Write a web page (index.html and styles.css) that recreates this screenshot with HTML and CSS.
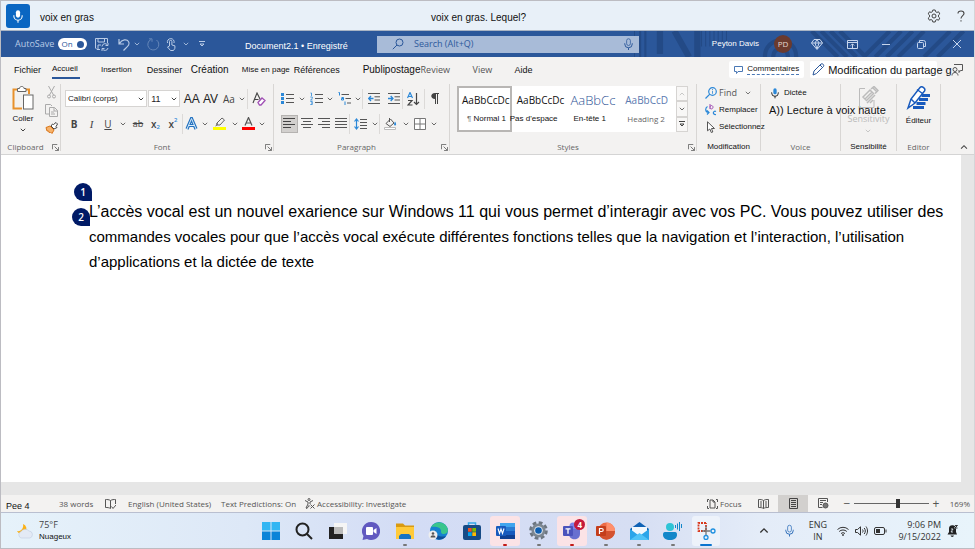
FILE: index.html
```
<!DOCTYPE html>
<html lang="fr">
<head>
<meta charset="utf-8">
<meta name="viewport" content="width=device-width, initial-scale=1">
<title>Document2.1</title>
<link rel="stylesheet" href="styles.css">
</head>
<body>
<svg class="sprite" aria-hidden="true">
  <symbol id="chev" viewBox="0 0 6 4"><path d="M.8.8 3 3l2.200-2.200" fill="none" stroke="currentColor" stroke-width=".8"/></symbol>
  <symbol id="launch" viewBox="0 0 8 8"><path d="M.5 6V.5H6M3 3l4 4M7.500 3.500v4h-4" fill="none" stroke="currentColor"/></symbol>
  <symbol id="mic" viewBox="0 0 12 16"><rect x="3.500" y="1" width="5" height="9" rx="2.500"/><path d="M1 7v1a5 5 0 0 0 10 0V7M6 13v3" fill="none" stroke="currentColor" stroke-width="1.300"/></symbol>
</svg>

<header class="voice">
  <button class="voice-mic" aria-label="Microphone"><svg width="10" height="14" fill="currentColor"><use href="#mic"/></svg></button>
  <span class="said">voix en gras</span>
  <span class="prompt">voix en gras. Lequel?</span>
  <button class="gear" aria-label="Paramètres"><svg width="14" height="14" viewBox="0 0 14 14" fill="none" stroke="#444" stroke-width="1"><path d="M5.800 1h2.400l.4 1.700 1.300.7 1.700-.6 1.200 2.100-1.300 1.200v1.800l1.300 1.200-1.200 2.100-1.700-.6-1.300.7L8.200 13H5.800l-.4-1.700-1.300-.7-1.700.6L1.200 9.100l1.300-1.200V6.100L1.200 4.900l1.200-2.100 1.700.6 1.300-.7z"/><circle cx="7" cy="7" r="2"/></svg></button>
  <button class="help" aria-label="Aide"><svg width="8" height="12" viewBox="0 0 8 12" fill="none" stroke="#444" stroke-width="1.100"><path d="M1 3.500C1 .2 7 .2 7 3.500 7 5.500 4 5.800 4 8.500M4 10.200v1.300"/></svg></button>
</header>

<div class="title">
  <svg class="pattern" viewBox="0 0 340 25" preserveAspectRatio="xMaxYMid slice" aria-hidden="true" fill="none" stroke="#234a86">
    <path d="M5 0v25M9 0v25M13 0v25M19 0v25M24 0v25" stroke-width="2"/>
    <path d="M38 0v22M52 0l14 25M74 0v25" stroke-width="6"/>
    <path d="M78 0v15M82 0v15M86 0v15M90 0v15M94 0v15M98 0v15M102 0v15" stroke-width="1"/>
    <circle cx="154" cy="24" r="7" stroke-width="4"/><circle cx="154" cy="24" r="15" stroke-width="4"/>
    <path d="M184 0l25 25M193 0l25 25M202 0l25 25M211 0l25 25M234 25l25-25M245 25l25-25M256 25l25-25M267 25l25-25M292 25l25-25M305 25l25-25" stroke-width="4"/>
  </svg>
  <span class="autosave">AutoSave</span>
  <button class="toggle" role="switch" aria-checked="true">On<i></i></button>
  <div class="quick">
    <button aria-label="Enregistrer"><svg width="14" height="13" viewBox="0 0 14 13" fill="none" stroke="currentColor"><path d="M5 11.500H2L.5 10V.5h12V5M3 .5V4h6.500V.5M3 11V7h3M7 8.500A3 3 0 0 1 12.500 7M13 5v2.500h-2.500M13 10a3 3 0 0 1-5.500 1M7 13v-2.500h2.500"/></svg></button>
    <button aria-label="Annuler"><svg width="13" height="13" viewBox="0 0 13 13" fill="none" stroke="currentColor" stroke-width="1.200"><path d="M1 1v5h5M1.500 5.500C4 1 9 1 10.500 3.500c2 3-1 5-5 9"/></svg></button>
    <button aria-label="Options"><svg width="6" height="4"><use href="#chev"/></svg></button>
    <button class="dim" aria-label="Rétablir"><svg width="13" height="13" viewBox="0 0 13 13" fill="none" stroke="currentColor"><path d="M4 1.500A5.500 5.500 0 1 0 9.500 2M2 .8h3v3"/></svg></button>
    <button aria-label="Tactile"><svg width="11" height="13" viewBox="0 0 11 13" fill="none" stroke="currentColor"><path d="M3.500 7V3.500a1.200 1.200 0 0 1 2.400 0V7l3 .8v2.500L7.500 12.500h-3L1.500 9 3.500 8zM1.500 5a3.400 3.400 0 1 1 6.500 0"/></svg></button>
    <button aria-label="Options"><svg width="6" height="4"><use href="#chev"/></svg></button>
    <button aria-label="Personnaliser"><svg width="6" height="6" viewBox="0 0 6 6" fill="none" stroke="currentColor"><path d="M0 .5h6M1 3l2 2 2-2z"/></svg></button>
  </div>
  <span class="docname">Document2.1 • Enregistré</span>
  <label class="search"><svg width="12" height="12" viewBox="0 0 12 12" fill="none" stroke="#2b579a"><circle cx="7.500" cy="4.500" r="3.500"/><path d="M5 7 .8 11.200"/></svg><input type="text" placeholder="Search (Alt+Q)" aria-label="Search"><svg width="9" height="12" class="outline"><use href="#mic"/></svg></label>
  <span class="user">Peyton Davis</span>
  <span class="avatar">PD</span>
  <div class="wins">
    <button aria-label="Premium"><svg width="12" height="11" viewBox="0 0 12 11" fill="none" stroke="currentColor"><path d="M3 .5h6L11.500 4 6 10.500.5 4zM.5 4h11M4 4l2 6 2-6-2-3.500z"/></svg></button>
    <button aria-label="Ruban"><svg width="11" height="9" viewBox="0 0 11 9" fill="none" stroke="currentColor"><path d="M.5.5h10v8H.5zM.5 2.500h10M5.500 8V4M3.800 5.500l1.700-1.700 1.700 1.700"/></svg></button>
    <button aria-label="Réduire"><svg width="9" height="9" viewBox="0 0 9 9" stroke="currentColor"><path d="M0 4.500h8"/></svg></button>
    <button aria-label="Agrandir"><svg width="9" height="9" viewBox="0 0 9 9" fill="none" stroke="currentColor"><rect x=".5" y="2.500" width="6" height="6" rx="1"/><path d="M2.500 2V.5h4A2 2 0 0 1 8.500 2.500v4H7"/></svg></button>
    <button aria-label="Fermer"><svg width="8" height="8" viewBox="0 0 8 8" stroke="currentColor"><path d="M0 0l8 8M8 0L0 8"/></svg></button>
  </div>
</div>

<nav class="tabs">
  <a href="#" class="m">Fichier</a>
  <a href="#" class="s active">Accueil</a>
  <a href="#" class="s">Insertion</a>
  <a href="#" class="m">Dessiner</a>
  <a href="#">Création</a>
  <a href="#" class="s">Mise en page</a>
  <a href="#" class="m">Références</a>
  <a href="#">Publipostage</a>
  <a href="#" class="seg">Review</a>
  <a href="#" class="seg">View</a>
  <a href="#" class="m">Aide</a>
  <button class="comments"><svg width="9" height="8" viewBox="0 0 9 8" fill="none" stroke="#4a78b5"><path d="M.5.5h8v5H4L2.500 7.500v-2h-2z"/></svg><span>Commentaires</span></button>
  <button class="editing"><svg width="13" height="13" viewBox="0 0 13 13" fill="none" stroke="#2b579a"><path d="M1 12l1-4 7-7c1.500-1 3.500 1 2.500 2.500l-7 7zM8 2l3 3"/></svg>Modification du partage g<svg class="person" width="12" height="12" viewBox="0 0 12 12" fill="none" stroke="#555"><path d="M3 .5h8.500v6H9.500L8 8.500V6M1 11.500c0-4 6-4 6 0"/><circle cx="4" cy="5.500" r="2"/></svg></button>
</nav>

<main class="ribbon">
  <section class="g clip">
    <div class="body">
      <button class="paste"><svg width="22" height="24" viewBox="0 0 22 24" fill="none"><path d="M5 3.500H1.500v19H10M14 3.500h3V8" stroke="#e8912d" stroke-width="2"/><path d="M5.500 5.500v-3h2C7.500-.2 12-.2 12 2.500h2v3z" fill="#fff" stroke="#666"/><rect x="11.500" y="9" width="9.500" height="14" fill="#fff" stroke="#666"/></svg><span>Coller</span><svg width="6" height="4"><use href="#chev"/></svg></button>
      <div class="stack">
        <button aria-label="Couper"><svg width="9" height="13" viewBox="0 0 9 13" fill="none" stroke="#aaa"><path d="M1.500 0l5 9M7.500 0l-5 9"/><circle cx="2" cy="10.500" r="1.500"/><circle cx="7" cy="10.500" r="1.500"/></svg></button>
        <button aria-label="Copier"><svg width="13" height="13" viewBox="0 0 13 13" fill="none" stroke="#aaa"><path d="M4.500 10H.5V.5h5L7 2M4.500 3.500h5l3 3v6h-8zM9 3.500V7h3.500M6 8h3M6 10h4"/></svg></button>
        <button aria-label="Reproduire"><svg width="13" height="12" viewBox="0 0 13 12" fill="none"><path d="M1 5.500 5 4l4 4-2 3.500L5.500 10l-1 1-1-2L2 9z" fill="#f6b26b" stroke="#d9761a"/><path d="M6 4l3 3 3-1.500-1-1L12.500 2 11 .5 8.500 2.500l-1-.5z" fill="#fff" stroke="#444"/></svg></button>
      </div>
    </div>
    <footer><span>Clipboard</span><button aria-label="Presse-papiers"><svg width="7" height="7"><use href="#launch"/></svg></button></footer>
  </section>

  <section class="g font">
    <div class="body rows">
      <div class="r1">
        <select class="family" aria-label="Police"><option>Calibri (corps)</option></select>
        <select class="size" aria-label="Taille"><option>11</option></select>
        <button class="big">AA</button><button class="big">AV</button>
        <button class="aa">Aa</button><button aria-label="Casse"><svg width="6" height="4"><use href="#chev"/></svg></button>
        <button class="bl" aria-label="Effacer"><svg width="14" height="14" viewBox="0 0 14 14" fill="none"><path d="M1 11 5 1l4 8M2.500 7.500h4" stroke="#444" stroke-width="1.100"/><path d="M6 10.500 10 6l3 2.500-4 4.500H7.500z" fill="#fff" stroke="#a04fb5" stroke-width="1.300"/></svg></button>
      </div>
      <div class="r2">
        <button class="b">B</button><button class="i">I</button><button class="u">U</button><button aria-label="Soulignement"><svg width="6" height="4"><use href="#chev"/></svg></button>
        <button class="st">ab</button><button class="x">x<sub>2</sub></button><button class="x">x<sup>2</sup></button>
        <button class="bl" aria-label="Effets"><svg width="13" height="13" viewBox="0 0 13 13" fill="none"><path d="M2 12 6.500 1.500 11 12M3.500 8.500h6" stroke="#2372c0" stroke-width="3.200"/><path d="M2 12 6.500 1.500 11 12M3.500 8.500h6" stroke="#d9ecfa" stroke-width="1"/></svg></button><button aria-label="Effets"><svg width="6" height="4"><use href="#chev"/></svg></button>
        <button aria-label="Surlignage"><svg width="13" height="13" viewBox="0 0 13 13" fill="none"><path d="M4 6 9 1l2.500 2-4.500 5H4zM4 6v2L2.500 9" stroke="#666"/><path d="M0 10h13v3H0z" fill="#ff0"/></svg></button><button aria-label="Surlignage"><svg width="6" height="4"><use href="#chev"/></svg></button>
        <button aria-label="Couleur"><svg width="13" height="13" viewBox="0 0 13 13" fill="none"><path d="M3 8.500 6.500.5 10 8.500M4 6h5" stroke="#555" stroke-width="1.200"/><path d="M0 10h13v3H0z" fill="#f00"/></svg></button><button aria-label="Couleur"><svg width="6" height="4"><use href="#chev"/></svg></button>
      </div>
    </div>
    <footer><span>Font</span><button aria-label="Police"><svg width="7" height="7"><use href="#launch"/></svg></button></footer>
  </section>

  <section class="g para">
    <div class="body rows">
      <div class="r1">
        <button aria-label="Puces"><svg width="13" height="13" viewBox="0 0 13 13"><path d="M0 1h3v3H0zM0 5h3v3H0zM0 9h3v3H0z" fill="#2b88d8"/><path d="M5 2.500h8M5 6.500h8M5 10.500h8" stroke="#555"/></svg></button><button aria-label="Puces"><svg width="6" height="4"><use href="#chev"/></svg></button>
        <button aria-label="Numérotation"><svg width="13" height="13" viewBox="0 0 13 13" fill="none"><path d="M.5 1h1v3M.3 5h2v1.500L.5 8h2M.3 9.500h2v3h-2M1 11h1" stroke="#2b88d8" stroke-width=".8"/><path d="M5 2.500h8M5 6.500h8M5 10.500h8" stroke="#555"/></svg></button><button aria-label="Numérotation"><svg width="6" height="4"><use href="#chev"/></svg></button>
        <button aria-label="Niveaux"><svg width="13" height="13" viewBox="0 0 13 13" fill="none"><path d="M.5.5h1v3M3.500 5.500h2v2.500h-2V6.500h2M7 9.500V13" stroke="#2b88d8"/><path d="M3.500 2.500H11M7.500 6.500H13M9 11h4" stroke="#555"/></svg></button><button aria-label="Niveaux"><svg width="6" height="4"><use href="#chev"/></svg></button>
        <button class="bl" aria-label="Diminuer le retrait"><svg width="12" height="11" viewBox="0 0 12 11" fill="none"><path d="M0 .5h12M6.500 3.800H12M6.500 7H12M0 10.500h12" stroke="#555"/><path d="M5.500 5.500H.8M3 3 .7 5.500 3 8" stroke="#2b88d8" stroke-width="1.300"/></svg></button>
        <button aria-label="Augmenter le retrait"><svg width="12" height="11" viewBox="0 0 12 11" fill="none"><path d="M0 .5h12M6.500 3.800H12M6.500 7H12M0 10.500h12" stroke="#555"/><path d="M0 5.500h4.700M2.700 3 5 5.500 2.700 8" stroke="#2b88d8" stroke-width="1.300"/></svg></button>
        <button class="bl" aria-label="Trier"><svg width="13" height="14" viewBox="0 0 13 14" fill="none"><path d="M.5 6 3 .5 5.500 6M1.500 4.500h3" stroke="#2b88d8" stroke-width="1.200"/><path d="M1 8.500h4L1 13h4.500M9.500 1v11.500M7 10l2.500 2.500L12 10" stroke="#444" stroke-width="1.200"/></svg></button>
        <button class="bl" aria-label="Marques"><svg width="8" height="11" viewBox="0 0 8 11"><path d="M4 0h4v1H7v10H6V1H5v10H4V6C-1 6-1 0 4 0z" fill="#444"/></svg></button>
      </div>
      <div class="r2">
        <button class="on" aria-label="Gauche"><svg width="12" height="11" viewBox="0 0 12 11" stroke="#444"><path d="M0 .5h12M0 3.500h8M0 6.500h12M0 9.500h8"/></svg></button>
        <button aria-label="Centre"><svg width="12" height="11" viewBox="0 0 12 11" stroke="#555"><path d="M0 .5h12M2 3.500h8M0 6.500h12M2 9.500h8"/></svg></button>
        <button aria-label="Droite"><svg width="12" height="11" viewBox="0 0 12 11" stroke="#555"><path d="M0 .5h12M4 3.500h8M0 6.500h12M4 9.500h8"/></svg></button>
        <button aria-label="Justifier"><svg width="12" height="11" viewBox="0 0 12 11" stroke="#555"><path d="M0 .5h12M0 3.500h12M0 6.500h12M0 9.500h12"/></svg></button>
        <button class="bl" aria-label="Interligne"><svg width="13" height="12" viewBox="0 0 13 12" fill="none"><path d="M2.500 1v10M.5 3.500l2-2.500 2 2.500M.5 8.500l2 2.500 2-2.500" stroke="#2b88d8" stroke-width="1.200"/><path d="M6 1.500h7M6 4.500h7M6 7.500h7M6 10.500h7" stroke="#555"/></svg></button><button aria-label="Interligne"><svg width="6" height="4"><use href="#chev"/></svg></button>
        <button class="bl" aria-label="Trame"><svg width="13" height="12" viewBox="0 0 13 12" fill="none"><path d="M2 5.500 6.500 1l3.500 4-4 3.500zM5.500 0v4" stroke="#555"/><path d="M11 3.500c1.500 2 1.500 4 0 4s-1-2 0-4z" fill="#2b88d8"/><path d="M.5 9.500h11v2H.5z" fill="#fff" stroke="#bbb"/></svg></button><button aria-label="Trame"><svg width="6" height="4"><use href="#chev"/></svg></button>
        <button aria-label="Bordures"><svg width="12" height="12" viewBox="0 0 12 12" fill="#fff" stroke="#777"><path d="M.5.5h11v11H.5zM6 .5v11M.5 6h11"/></svg></button><button aria-label="Bordures"><svg width="6" height="4"><use href="#chev"/></svg></button>
      </div>
    </div>
    <footer><span>Paragraph</span><button aria-label="Paragraphe"><svg width="7" height="7"><use href="#launch"/></svg></button></footer>
  </section>

  <section class="g styles">
    <div class="body gallery">
      <button class="card sel"><b>AaBbCcDc</b><span><em>¶</em> Normal 1</span></button>
      <button class="card"><b>AaBbCcDc</b><span class="pull">Pas d'espace</span></button>
      <button class="card h1"><b>AaBbCc</b><span>En-tête 1</span></button>
      <button class="card h2"><b>AaBbCcD</b><span>Heading 2</span></button>
      <div class="scroll">
        <button aria-label="Haut"><svg class="up" width="6" height="4"><use href="#chev"/></svg></button>
        <button aria-label="Bas"><svg width="6" height="4"><use href="#chev"/></svg></button>
        <button aria-label="Plus"><svg width="6" height="6" viewBox="0 0 6 6" fill="none" stroke="currentColor"><path d="M0 .5h6M1 3l2 2 2-2z"/></svg></button>
      </div>
    </div>
    <footer><span>Styles</span><button aria-label="Styles"><svg width="7" height="7"><use href="#launch"/></svg></button></footer>
  </section>

  <section class="g edit">
    <div class="body list">
      <button class="find"><svg width="12" height="12" viewBox="0 0 12 12" fill="none" stroke="#2b88d8" stroke-width="1.200"><circle cx="7.500" cy="4.500" r="3.800"/><path d="M4.800 7.200.5 11.500"/><path d="M7.500 3.800v3M7.500 2v1" stroke-width=".8"/></svg><span>Find</span><svg width="6" height="4"><use href="#chev"/></svg></button>
      <button><svg width="12" height="12" viewBox="0 0 12 12" fill="none"><path d="M5 0v5M5 3c0-2 3-2 3 .200S5 5.500 5 3.500" stroke="#a04fb5"/><path d="M2.500 2.500C0 4 0 8 3.500 8.500M2 6.500l2 2-2 2M11 7.500c-3-1.500-4 3.500 0 3" stroke="#2b88d8" stroke-width="1.200"/></svg><span>Remplacer</span></button>
      <button><svg width="12" height="12" viewBox="0 0 12 12" fill="#fff" stroke="#555"><path d="M2.500.8v9L4.800 8l1.500 3.500L7.800 11 6.500 7.500h3z"/></svg><span>Sélectionnez</span></button>
    </div>
    <footer class="fr"><span>Modification</span></footer>
  </section>

  <section class="g say">
    <div class="body list">
      <button class="dictate"><svg width="8" height="12" fill="#2b88d8"><use href="#mic"/></svg><span>Dictée</span></button>
      <button class="read">A)) Lecture à voix haute</button>
    </div>
    <footer><span>Voice</span></footer>
  </section>

  <section class="g sens">
    <div class="body col">
      <button><svg width="22" height="22" viewBox="0 0 22 22" fill="none" stroke="#bbb"><path d="M8 2.500H2.500v19H17V14"/><path d="M6 11l7-7 3.500 3.500-7 7zM8 13l7-7M14 3l3-2.500 4 4L18 7.500M10 17l8-8M16 2l4 4M13 17l3-3" stroke-width="1.500"/></svg><span class="off">Sensitivity</span><svg width="6" height="4"><use href="#chev"/></svg></button>
    </div>
    <footer class="fr"><span>Sensibilité</span></footer>
  </section>

  <section class="g editor">
    <div class="body col">
      <button><svg width="24" height="24" viewBox="0 0 24 24" fill="none" stroke="#185abd"><path d="M2 22 5 13 14 1.500c2-2 6 1 4.500 3.500L9 17z" stroke-width="1.500" fill="#fff"/><path d="M11 3.500l5.500 4M5 13l4 4" stroke-width="1.500"/><path d="M15.500 9.500H24M13 13.500h9M10.500 17.500h9M7 21.500h11" stroke-width="3"/></svg><span>Éditeur</span></button>
    </div>
    <footer><span>Editor</span></footer>
  </section>
  <button class="collapse" aria-label="Réduire le ruban"><svg class="up" width="8" height="6"><use href="#chev"/></svg></button>
</main>

<div class="canvas">
  <article class="page">
    <span class="tag t1">1</span><span class="tag t2">2</span>
    <p><span class="lead">L’accès vocal est un nouvel exarience sur Windows 11 qui vous permet d’interagir avec vos PC. Vous pouvez utiliser des</span><br>
    commandes vocales pour que l’accès vocal exécute différentes fonctions telles que la navigation et l’interaction, l’utilisation<br>
    d’applications et la dictée de texte</p>
  </article>
</div>

<footer class="status">
  <span class="pg">Pee 4</span>
  <span>38 words</span>
  <svg width="11" height="10" viewBox="0 0 11 10" fill="none" stroke="#555"><path d="M5.500 1.500C4 .5 2 .5.5.5v8c2 0 3.500 0 5 1V1.500C7 .5 9 .5 10.500.5V5M6.500 7.500l1.500 2L11 6"/></svg>
  <span>English (United States)</span>
  <span>Text Predictions: On</span>
  <span class="acc"><svg width="11" height="11" viewBox="0 0 11 11" fill="none" stroke="#555"><circle cx="5" cy="1.500" r="1"/><path d="M1 2.500l3 1.500v2L2 10l1 .5 2-3 1 1M9 2.500 6 4v2M6.500 6.500l4 4M10.500 6.500l-4 4"/></svg>Accessibility: Investigate</span>
  <span class="acc"><svg width="11" height="10" viewBox="0 0 11 10" fill="none" stroke="#555"><path d="M2 .5H.5V3M9 .5h1.500V3M.5 7v2.500H2M10.500 7v2.500H9M3 1h3l2 2v6H3zM6 1v2h2"/></svg>Focus</span>
  <button aria-label="Lecture"><svg width="11" height="10" viewBox="0 0 11 10" fill="none" stroke="#555"><path d="M.5.5c2 0 3.500 0 5 1 1.500-1 3-1 5-1v8c-2 0-3.500 0-5 1-1.500-1-3-1-5-1zM5.500 1.500v8M2 3h2M2 5h2M2 7h2M7 3h2M7 5h2M7 7h2"/></svg></button>
  <button class="on" aria-label="Page"><svg width="9" height="11" viewBox="0 0 9 11" fill="none" stroke="#444"><path d="M.5.5h8v10h-8zM2 2.500h5M2 4.500h5M2 6.500h5M2 8.500h5"/></svg></button>
  <button aria-label="Web"><svg width="11" height="11" viewBox="0 0 11 11" fill="none" stroke="#555"><path d="M4.500 9.500h-4v-9h9V4M2 2.500h6M2 4.500h3M2 6.500h2"/><circle cx="7.500" cy="7.500" r="2.500" fill="#777"/></svg></button>
  <div class="zoom"><button aria-label="Zoom arrière">−</button><input type="range" min="0" max="100" value="59" aria-label="Zoom"><button aria-label="Zoom avant">+</button><span>169%</span></div>
</footer>

<nav class="taskbar">
  <div class="weather">
    <svg width="19" height="16" viewBox="0 0 19 16"><path d="M8 1a5 5 0 1 1-6 7c4 1 7-3 6-7z" fill="#fbb116"/><path d="M6 15a3.500 3.500 0 0 1 0-6.500 5 5 0 0 1 8-.5 3.600 3.600 0 0 1 1 7z" fill="#e3eaf5" stroke="#b9c7dc" stroke-width=".5"/></svg>
    <div><span class="deg">75°F</span><span class="sky">Nuageux</span></div>
  </div>
  <div class="apps">
    <button aria-label="Démarrer"><svg width="18" height="18" viewBox="0 0 18 18" fill="#149be5"><path d="M0 0h8.500v8.500H0zM9.500 0H18v8.500H9.500z" fill="#32b6f3"/><path d="M0 9.500h8.500V18H0zM9.500 9.500H18V18H9.500z" fill="#0a84d8"/></svg></button>
    <button aria-label="Recherche"><svg width="18" height="18" viewBox="0 0 18 18" fill="none" stroke="#222" stroke-width="2"><circle cx="7.500" cy="7.500" r="6"/><path d="M12 12l5 5"/></svg></button>
    <button aria-label="Vue des tâches"><svg width="18" height="18" viewBox="0 0 18 18"><path d="M0 5h14v12H0z" fill="#222"/><path d="M5 1h13v11H5z" fill="#f5f5f5"/><path d="M5 5h9v7H5z" fill="#bbb"/></svg></button>
    <button aria-label="Conversation"><svg width="18" height="18" viewBox="0 0 18 18"><path d="M9 0a9 9 0 1 1-4 17l-4.500 1L1.500 14A9 9 0 0 1 9 0z" fill="#6159c0"/><rect x="4" y="5" width="7" height="8" rx="1" fill="#fff"/><path d="M11.500 8 14.500 6v6l-3-2z" fill="#fff"/></svg></button>
    <button class="run" aria-label="Explorateur"><svg width="18" height="18" viewBox="0 0 18 18"><path d="M0 1.500h7l2 2h9v5H0z" fill="#d99a12"/><path d="M0 5h18v12H0z" fill="#ffca3a"/><path d="M3 17v-3l2-2h8l2 2v3z" fill="#1673c4"/></svg></button>
    <button aria-label="Edge"><svg width="20" height="18" viewBox="0 0 20 18"><circle cx="11" cy="9" r="9" fill="#1582cf"/><path d="M3 5C6-1 18-2 20 8c0 5-7 5-7 2 1-5-6-6-10-5z" fill="#39c58c"/><path d="M8 8c-1 4 3 8 10 6-4 6-13 4-12-3z" fill="#0e4f98"/><circle cx="5" cy="13" r="4.500" fill="#eee"/><circle cx="5" cy="11.500" r="1.300" fill="#555"/><path d="M2.500 15.500c0-3 5-3 5 0z" fill="#555"/></svg></button>
    <button aria-label="Store"><svg width="18" height="18" viewBox="0 0 18 18"><path d="M5.500 4V1h7v3" fill="none" stroke="#35a8e8" stroke-width="1.500"/><rect y="3" width="18" height="15" rx="2" fill="#164b86"/><path d="M5 6h3.700v3.700H5z" fill="#f25022"/><path d="M9.300 6H13v3.700H9.300z" fill="#7fba00"/><path d="M5 10.300h3.700V14H5z" fill="#00a4ef"/><path d="M9.300 10.300H13V14H9.300z" fill="#ffb900"/></svg></button>
    <button class="run hot" aria-label="Word"><svg width="19" height="18" viewBox="0 0 19 18"><path d="M4 1h15v5H4z" fill="#41a5ee"/><path d="M4 5h15v4H4z" fill="#2b7cd3"/><path d="M4 9h15v4H4z" fill="#185abd"/><path d="M4 13h15v4H4z" fill="#103f91"/><rect y="4" width="10" height="10" rx="1" fill="#185abd"/><path d="M2 6.500l1.500 5L5 7l1.500 4.500 1.500-5" fill="none" stroke="#fff" stroke-width="1.100"/></svg></button>
    <button class="run" aria-label="Paramètres"><svg width="19" height="19" viewBox="0 0 19 19"><circle cx="9.500" cy="9.500" r="7.800" fill="none" stroke="#6d7680" stroke-width="3" stroke-dasharray="3.700 2.426"/><circle cx="9.500" cy="9.500" r="7" fill="#7d8791"/><circle cx="9.500" cy="9.500" r="4.300" fill="#e8edf5"/><circle cx="9.500" cy="9.500" r="3.300" fill="#0f5fb0"/></svg></button>
    <button class="run hot" aria-label="Teams"><svg width="19" height="18" viewBox="0 0 19 18"><circle cx="10" cy="4" r="3.500" fill="#7b83eb"/><path d="M6 7h11v5c0 7-11 7-11 0z" fill="#6870d0"/><rect y="4" width="10" height="10" rx="1" fill="#4b53bc"/><path d="M2.500 6.800h5M5 6.800v5" stroke="#fff" stroke-width="1.300"/></svg><span class="count">4</span></button>
    <button class="run" aria-label="PowerPoint"><svg width="19" height="18" viewBox="0 0 19 18"><circle cx="10.500" cy="9" r="8.500" fill="#ed6c47"/><path d="M10.500.5A8.500 8.500 0 0 1 19 9h-8.500z" fill="#ff8f6b"/><path d="M19 9a8.500 8.500 0 0 1-15 5.500V9z" fill="#d35230"/><rect y="4" width="10" height="10" rx="1" fill="#c43e1c"/><path d="M3.500 12V6.500h2.200c2 0 2 3 0 3H3.500" fill="none" stroke="#fff" stroke-width="1.200"/></svg></button>
    <button class="run" aria-label="Courrier"><svg width="19" height="18" viewBox="0 0 19 18"><path d="M0 7 9.500 0 19 7v2H0z" fill="#1062b5"/><path d="M2 5h15v8H2z" fill="#f2f8fd"/><path d="M0 7l9.500 7L19 7v11H0z" fill="#2ba5e9"/><path d="M0 18 9.500 11 19 18z" fill="#50c3f7"/></svg></button>
    <button class="run" aria-label="Accès vocal"><svg width="19" height="18" viewBox="0 0 19 18"><circle cx="7" cy="5" r="4" fill="#2ec4d6"/><path d="M0 13c0-3 1-3 3-3h8c2 0 3 0 3 3 0 3-3 5-7 5s-7-2-7-5z" fill="#1287c9"/><path d="M12.500 3v3M14.500 1.500v6M16.500 0v9M18.500 2v4" stroke="#1287c9"/></svg></button>
    <button class="run here" aria-label="Capture"><svg width="19" height="18" viewBox="0 0 19 18" fill="none"><path d="M9 1H1.500V9H9V1" stroke="#d93a1e" stroke-width="1.800" stroke-dasharray="2 1"/><path d="M5 9h8.500M9 13V4" stroke="#777" stroke-width="1.300"/><circle cx="9" cy="15.500" r="2" stroke="#1c8fe0" stroke-width="1.300"/><circle cx="16" cy="9" r="2" stroke="#1c8fe0" stroke-width="1.300"/></svg></button>
  </div>
  <div class="tray">
    <button aria-label="Icônes"><svg class="up" width="10" height="7"><use href="#chev"/></svg></button>
    <button class="blue" aria-label="Micro"><svg width="9" height="13" class="outline"><use href="#mic"/></svg></button>
    <span class="lang"><span>ENG</span><span>IN</span></span>
    <svg width="12" height="10" viewBox="0 0 12 10" fill="none" stroke="#333"><path d="M.5 3.500a8 8 0 0 1 11 0M2.200 5.500a5.500 5.500 0 0 1 7.600 0M4 7.500a3 3 0 0 1 4 0"/><circle cx="6" cy="9" r=".6"/></svg>
    <svg width="13" height="10" viewBox="0 0 13 10" fill="none" stroke="#333"><path d="M.5 3.500h2L5.500.8v8.400l-3-2.700h-2zM7.500 3.500c.8 1 .8 2 0 3M9.200 2c1.500 2 1.500 4 0 6M11 .5c2 3 2 6 0 9"/></svg>
    <svg width="13" height="8" viewBox="0 0 13 8" fill="none" stroke="#333"><rect x=".5" y=".5" width="10" height="7" rx="1.500"/><path d="M12 2.500v3"/><path d="M2 2h4v4H2z" fill="#333" stroke="none"/></svg>
    <span class="clock"><span>9:06 PM</span><span>9/15/2022</span></span>
    <svg width="11" height="12" viewBox="0 0 11 12"><path d="M.5 9.500 2 7V4a3.500 3.500 0 0 1 7-.5V7l1 2.500zM3.500 10.500h3.500a1.800 1.800 0 0 1-3.500 0z" fill="#222"/><path d="M4 4h2L4 7h2M7.500.5H10L7.500 3H10" fill="none" stroke="#eaf3fa" stroke-width=".8"/><path d="M8 .5h2.500L8 3h2.500" fill="none" stroke="#222" stroke-width=".9"/></svg>
  </div>
</nav>
</body>
</html>
```
FILE: styles.css
```
* { box-sizing: border-box; }
body {
  margin: 0;
  min-height: 100vh;
  display: flex;
  flex-direction: column;
  font: 8px/12px "Open Sans", "Noto Sans", sans-serif;
  color: #444;
  background: #e6e6e6;
  border: 1px solid #bcbcc2;
  border-right-color: #d5d5d8;
}
button, input, select { font: inherit; color: inherit; }
button { padding: 0; border: 0; background: none; display: flex; align-items: center; justify-content: center; white-space: nowrap; }
a { color: inherit; text-decoration: none; }
svg { flex: none; display: block; }
.sprite { position: absolute; width: 0; height: 0; }
.up { transform: rotate(180deg); }
.outline { fill: none; stroke: currentColor; }

/* Voice access bar */
.voice {
  display: grid;
  grid-template-columns: minmax(0, 39fr) minmax(0, 391fr) minmax(0, 489fr) 28fr 26fr;
  align-items: center;
  height: 30px;
  background: #e8f0f8;
  color: #111;
  font: 10px/14px "Liberation Sans", sans-serif;
  border-bottom: 1px solid #a9b4c4;
}
.voice span { padding-top: 4px; }
.voice-mic { width: 24px; height: 24px; margin-left: 5px; border-radius: 3px; background: #0a66c2; color: #fff; }

/* Title bar */
.title {
  position: relative;
  display: grid;
  grid-template-columns: minmax(0, 43fr) minmax(0, 37fr) minmax(0, 150fr) minmax(0, 132fr) minmax(0, 262fr) minmax(0, 120fr) minmax(0, 41fr) minmax(0, 174fr);
  padding-left: 14px;
  align-items: center;
  height: 26px;
  background: #2b579a;
  color: #b9cbe6;
}
.title > * { position: relative; }
.title > .pattern { position: absolute; right: 0; top: 0; width: 340px; height: 100%; }
.autosave { font-size: 9px; }
.toggle { width: 29px; height: 12px; border-radius: 6px; background: #fff; color: #2b579a; gap: 4px; }
.toggle i { width: 7px; height: 7px; border-radius: 50%; background: #2b579a; }
.quick { display: grid; grid-template-columns: 23fr 16fr 13fr 19fr 17fr 16fr 46fr; }
.quick button { justify-content: start; }
.dim { opacity: .4; }
.docname { color: #fff; font: 9px/12px "Liberation Sans", sans-serif; padding-top: 4px; white-space: nowrap; }
.search { display: flex; align-items: center; height: 17px; padding: 0 6px 0 15px; gap: 10px; background: #a8bbd8; color: #2b579a; }
.search input { flex: 1; min-width: 0; padding: 0; border: 0; background: none; font-size: 9px; }
.search input::placeholder { color: #2f5a9c; opacity: 1; }
.user { text-align: right; color: #fff; font: 8px/12px "Liberation Sans", sans-serif; white-space: nowrap; }
.avatar { justify-self: end; width: 18px; height: 18px; margin-right: 8px; border-radius: 50%; background: #6b3a2e; color: #e6d6d0; text-align: center; line-height: 18px; }
.wins { display: grid; grid-template-columns: repeat(5, 1fr); color: #c6d5ec; }

/* Ribbon tabs */
.tabs {
  display: grid;
  grid-template-columns: minmax(0, 38fr) minmax(0, 49fr) minmax(0, 46fr) minmax(0, 44fr) minmax(0, 51fr) minmax(0, 52fr) minmax(0, 69fr) minmax(0, 58fr) minmax(0, 52fr) minmax(0, 42fr) minmax(0, 215fr) minmax(0, 81fr) minmax(0, 164fr);
  padding-left: 13px;
  height: 25px;
  align-items: center;
  background: #f3f2f1;
  color: #111;
  font: 10px/14px "Liberation Sans", sans-serif;
  white-space: nowrap;
}
.tabs .m { font-size: 9px; }
.tabs .s { font-size: 8px; line-height: 12px; }
.tabs .active { justify-self: start; width: 28px; border-bottom: 2px solid #2b579a; line-height: 16px; }
.tabs .seg { font: 9px/12px "Open Sans", sans-serif; color: #555; }
.comments, .editing { height: 17px; background: #fff; border-radius: 2px; }
.comments { width: 75px; gap: 4px; font-size: 8px; }
.comments span { border-bottom: 1px dashed #4a78b5; line-height: 10px; }
.editing { justify-content: start; width: 127px; gap: 3px; padding-left: 2px; font-size: 11px; }
.person { margin-left: -4px; }

/* Ribbon */
.ribbon {
  display: grid;
  grid-template-columns: minmax(0, 60fr) minmax(0, 213fr) minmax(0, 176fr) minmax(0, 247fr) minmax(0, 64fr) minmax(0, 80fr) minmax(0, 56fr) minmax(0, 44fr) minmax(0, 33fr);
  height: 73px;
  background: #f3f2f1;
  border-bottom: 1px solid #d4d4d4;
}
.g { display: flex; flex-direction: column; padding-top: 4px; border-right: 1px solid; border-image: linear-gradient(#f3f2f1 3px, #d8d6d4 3px, #d8d6d4 68px, #f3f2f1 68px) 1; }
.body { flex: 1; display: flex; }
.g footer { display: flex; align-items: center; justify-content: center; height: 14px; color: #666; }
.g footer > span { flex: 1; text-align: center; }
.g footer button { width: 10px; }
.fr { font-family: "Liberation Sans", sans-serif; }
.g footer.fr { color: #111; }
.rows { flex-direction: column; }
.r1, .r2 { display: grid; height: 25px; align-items: center; justify-items: center; }
.bl { border-left: 1px solid #dcdad8; justify-self: stretch; height: 20px; }
.paste { flex-direction: column; gap: 4px; width: 44px; color: #111; font-family: "Liberation Sans", sans-serif; line-height: 10px; justify-content: start; }
.stack { display: flex; flex-direction: column; gap: 5px; align-items: center; }

.font .r1 { grid-template-columns: 84fr 35fr 18fr 20fr 17fr 10fr 22fr; padding: 0 4px; }
.font .r2 { grid-template-columns: 18fr 17fr 16fr 13fr 18fr 17fr 18fr 17fr 12fr 17fr 13fr 15fr 12fr; padding: 0 5px 0 4px; }
select { appearance: none; height: 17px; padding: 0 2px; border: 1px solid #d6d4d2; border-radius: 0; background: #fff url("data:image/svg+xml,%3Csvg xmlns='http://www.w3.org/2000/svg' width='6' height='4'%3E%3Cpath d='M.8.8 3 3 5.200.8' fill='none' stroke='%23444'/%3E%3C/svg%3E") no-repeat right 2px center; color: #222; justify-self: start; font-family: "Liberation Sans", sans-serif; }
.family { width: 82px; }
.size { width: 32px; font-size: 9px; }
.big { font: 12px/14px "Liberation Sans", sans-serif; color: #222; }
.aa { font-size: 10px; }
.b { font-weight: 700; font-size: 10px; }
.i { font: italic 11px/12px "Liberation Serif", serif; }
.u { font-size: 10px; text-decoration: underline; }
.st { font-size: 9px; text-decoration: line-through; }
.x { font-size: 10px; font-weight: 600; }
.x sub, .x sup { font-size: 6px; line-height: 6px; color: #2b88d8; }
.x sub { padding-top: 7px; }
.x sup { padding-bottom: 7px; }

.para .r1 { grid-template-columns: 18fr 11fr 17fr 11fr 17fr 10fr 23fr 17fr 22fr 20fr; padding: 0 5px; }
.para .r2 { grid-template-columns: 18fr 17fr 17fr 17fr 21fr 9fr 22fr 10fr 18fr 10fr; padding: 0 10px 0 6px; }
.on { background: #d2d0ce; }
.r2 .on { width: 17px; height: 18px; border: 1px solid #b5b3b1; }

.gallery { display: grid; grid-template-columns: 55fr 55fr 55fr 55fr 12fr; flex: none; height: 46px; margin: 0 8px 0 7px; background: #fff; }
.styles footer { margin-top: auto; }
.card { flex-direction: column; align-items: flex-start; gap: 6px; min-width: 0; padding-left: 5px; color: #111; font-family: "Liberation Sans", sans-serif; }
.card b { font: 400 10px/14px "Open Sans", sans-serif; }
.card em { font-style: normal; color: #777; }
.sel { border: 2px solid #b8b6b4; padding-left: 3px; }
.sel span { padding-left: 5px; }
.pull { margin-left: -7px; }
.card.h1 { padding-left: 4px; }
.h1 b { font: 300 13px/14px "Open Sans", sans-serif; color: #2f5496; }
.h1 span { padding-left: 3px; }
.card.h2 { padding-left: 4px; }
.h2 b { color: #5b7ab0; }
.h2 span { padding-left: 2px; font: 8px/12px "Open Sans", sans-serif; color: #666; }
.scroll { display: grid; grid-template-rows: repeat(3, 1fr); }
.scroll button { border: 1px solid #d6d4d2; background: #f8f7f6; }
.scroll button:first-child { color: #bbb; }

.list { flex-direction: column; align-items: flex-start; gap: 3px; padding-left: 8px; }
.list button { height: 14px; gap: 2px; color: #111; font-family: "Liberation Sans", sans-serif; }
.list .find { font: 9px/12px "Open Sans", sans-serif; color: #555; }
.find svg:last-child { margin-left: 6px; }
.say .dictate { gap: 5px; margin-left: 2px; }
.say .read { font-size: 11px; }
.col { justify-content: center; }
.col button { flex-direction: column; justify-content: start; gap: 3px; color: #111; font-family: "Liberation Sans", sans-serif; }
.col.body button { gap: 5px; }
.sens .body button { color: #bbb; }
.off { font: 9px/11px "Open Sans", sans-serif; }
.collapse { align-self: end; justify-self: center; height: 14px; padding-left: 12px; }

/* Document */
.canvas { flex: 1; display: flex; padding: 0 13px 13px 0; }
.page { position: relative; flex: 1; background: #fff; padding: 44px 0 0 88px; }
.page p { margin: 0; font: 15px/25px "Liberation Sans", sans-serif; color: #000; white-space: nowrap; }
.lead { font-size: 16px; }
.tag { position: absolute; width: 18px; height: 18px; border-radius: 9px 9px 0 9px; background: #001a66; color: #fff; text-align: center; font-size: 10px; line-height: 18px; font-weight: 600; }
.t1 { left: 73px; top: 28px; }
.t2 { left: 71px; top: 53px; }

/* Status bar */
.status {
  display: grid;
  grid-template-columns: minmax(0, 53fr) minmax(0, 46fr) minmax(0, 23fr) minmax(0, 93fr) minmax(0, 83fr) minmax(0, 403fr) minmax(0, 42fr) minmax(0, 29fr) minmax(0, 30fr) minmax(0, 31fr) minmax(0, 135fr);
  padding-left: 5px;
  height: 17px;
  align-items: center;
  background: #f3f2f1;
  color: #555;
  white-space: nowrap;
}
.status button { height: 17px; }
.pg { font: 9px/12px "Liberation Sans", sans-serif; color: #111; padding-top: 4px; }
.acc { display: flex; align-items: center; gap: 2px; }
.zoom { display: flex; align-items: center; gap: 3px; padding: 0 4px; }
.zoom button { font-size: 12px; width: 8px; }
.zoom span { margin-left: auto; }
.zoom input { appearance: none; flex: 1; min-width: 0; max-width: 75px; height: 10px; margin: 0; background: linear-gradient(#666, #666) center / 100% 1px no-repeat; }
.zoom input::-webkit-slider-thumb { appearance: none; width: 4px; height: 9px; background: #333; }

/* Taskbar */
.taskbar {
  display: grid;
  grid-template-columns: minmax(0, 253fr) minmax(0, 469fr) minmax(0, 251fr);
  height: 36px;
  align-items: center;
  border-top: 1px solid #b9bfd0;
  background: linear-gradient(90deg, #e6f2fa, #dde8f7 25%, #d3dcf5 42%, #d6def3 65%, #e4ecf8 78%, #e8f4fb);
}
.weather { display: flex; align-items: center; gap: 5px; padding-left: 14px; }
.weather span { display: block; }
.deg { font-size: 9px; }
.sky { font: 8px/12px "Liberation Sans", sans-serif; color: #111; }
.apps { display: grid; grid-template-columns: repeat(14, minmax(0, 1fr)); justify-items: center; }
.apps button { position: relative; width: 30px; height: 30px; border-radius: 3px; }
.run::after { content: ""; position: absolute; left: 13px; bottom: 0; width: 4px; height: 2px; border-radius: 1px; background: #777; }
.hot { background: #fbe3e6; }
.hot::after { background: #c21b17; }
.apps .here { background: #edf2fa; width: 28px; }
.here::after { left: 8px; width: 12px; background: #0a74cf; }
.count { position: absolute; right: 2px; top: 3px; width: 11px; height: 11px; border-radius: 50%; background: #c4193c; color: #fff; font-size: 8px; line-height: 11px; font-weight: 700; }
.tray { display: grid; grid-template-columns: 24fr 26fr 32fr 18fr 18fr 21fr 50fr 23fr; padding: 0 10px 0 29px; align-items: center; justify-items: center; font-size: 9px; color: #333; }
.tray > span > span { display: block; }
.lang { text-align: center; }
.blue { color: #2b6cb8; }
.clock { text-align: right; justify-self: end; white-space: nowrap; }
```
